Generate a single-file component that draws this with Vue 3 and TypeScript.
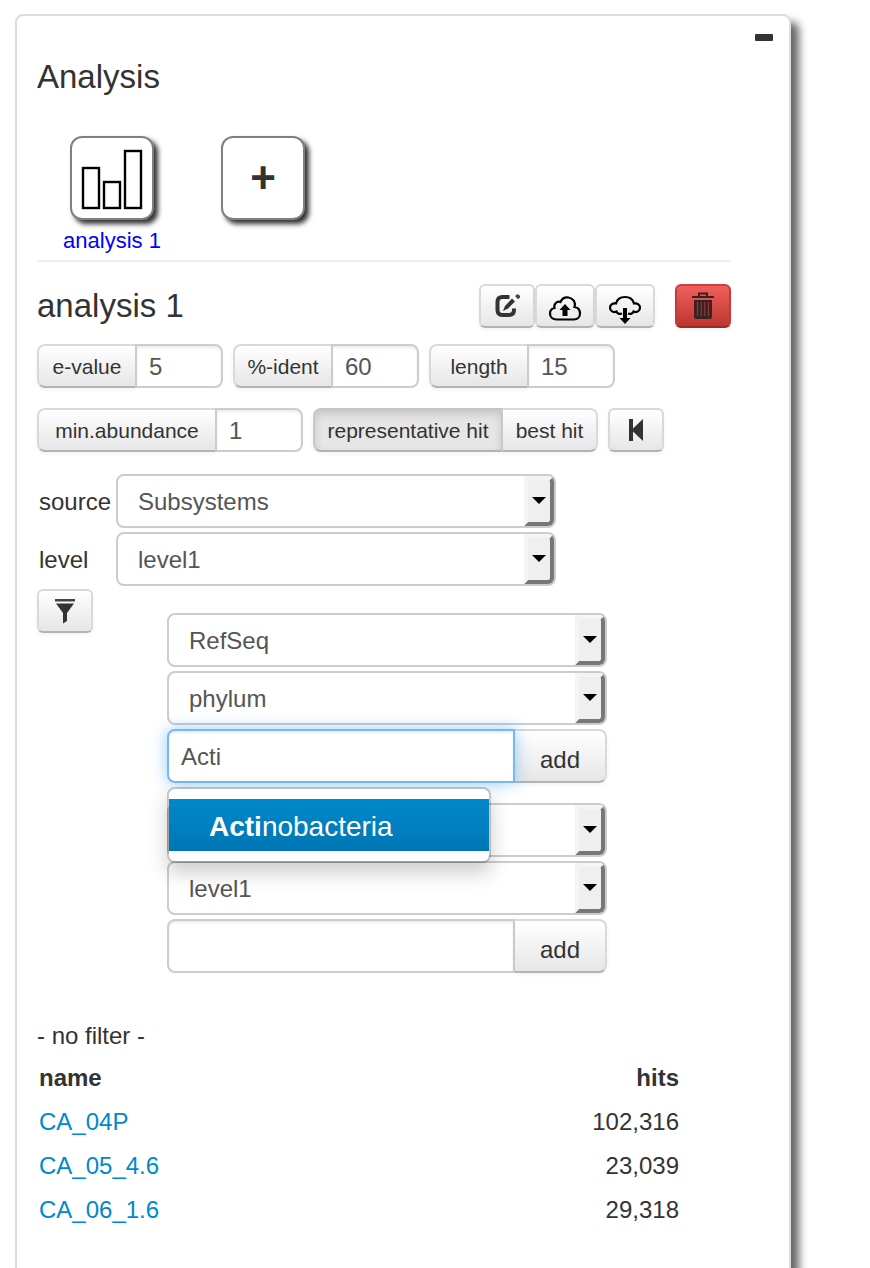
<script setup lang="ts">
import { ref } from 'vue'

interface Threshold {
  id: string
  label: string
  value: string
}

interface Row {
  name: string
  hits: number
}

const cutoffs = ref<Threshold[]>([
  { id: 'evalue', label: 'e-value', value: '5' },
  { id: 'ident', label: '%-ident', value: '60' },
  { id: 'length', label: 'length', value: '15' },
])
const abundance = ref('1')
const hitMode = ref<'representative' | 'best'>('representative')

const sources = ['Subsystems', 'RefSeq', 'KO', 'COG']
const levels = ['level1', 'level2', 'level3']
const ranks = ['domain', 'phylum', 'class', 'order']

const source = ref('Subsystems')
const level = ref('level1')
const taxSource = ref('RefSeq')
const taxRank = ref('phylum')
const taxText = ref('Acti')
const fnSource = ref('Subsystems')
const fnLevel = ref('level1')
const fnText = ref('')

const rows: Row[] = [
  { name: 'CA_04P', hits: 102316 },
  { name: 'CA_05_4.6', hits: 23039 },
  { name: 'CA_06_1.6', hits: 29318 },
]
const format = (n: number): string => n.toLocaleString('en-US')
</script>

<template>
  <main class="panel">
    <button class="collapse" type="button" aria-label="Collapse">
      <svg width="18" height="7" viewBox="0 0 18 7"><rect width="18" height="7" rx="1" fill="#333" /></svg>
    </button>

    <div class="body">
      <h1 class="title">Analysis</h1>

      <div class="tiles">
        <div class="tile-col">
          <button class="tile" type="button" aria-labelledby="tile-name">
            <svg width="62" height="62" viewBox="0 0 62 62" fill="none" stroke="#000" stroke-width="2.4">
              <rect x="2" y="19" width="16" height="40" />
              <rect x="23" y="33" width="16" height="26" />
              <rect x="44" y="2" width="16" height="57" />
            </svg>
          </button>
          <span id="tile-name" class="tile-name">analysis 1</span>
        </div>
        <div class="tile-col">
          <button class="tile plus" type="button">+</button>
        </div>
      </div>

      <div class="heading">
        <h2 class="title">analysis 1</h2>
        <div class="tools">
          <button class="btn" type="button" aria-label="Edit">
            <svg width="26" height="26" viewBox="0 0 26 26" fill="none">
              <path d="M15.500 4H8.500Q3.500 4 3.500 9V17Q3.500 22 8.500 22H15Q20 22 20 17V15.500" stroke="#333" stroke-width="4" />
              <path d="M9 18L11 13L18 5.500L21 8.500L14 15.500Z" fill="#333" />
              <path d="M21 3L23 1.500Q24 1 25 2L26 3Q26.500 4 25.700 4.800L24 6.200Z" fill="#444" />
            </svg>
          </button>
          <button class="btn wide" type="button" aria-label="Upload">
            <svg class="cloud" width="34" height="32" viewBox="0 0 34 32">
              <path d="M8.500 26.500C4.500 26.500 2 24 2 20.500C2 17.500 4 15.500 6.500 15C5.500 11 9 7.500 12.500 9C14 5.500 17 4 20.500 4.500C25.500 5.500 28 9.500 26.500 14C30 14.500 32 17 32 20.500C32 24 29.500 26.500 26 26.500Z" fill="none" stroke="#000" stroke-width="2.2" />
              <path d="M17 11L22.500 17H19.500V23H14.500V17H11.500Z" fill="#000" />
            </svg>
          </button>
          <button class="btn wide" type="button" aria-label="Download">
            <svg class="cloud" width="34" height="32" viewBox="0 0 34 32">
              <path d="M14 20.500C11.500 21.500 9 20.500 8.500 18.500C5 20 2 18 2 14.800C2 11.700 4.500 10 8 10.500C9 6.500 12.500 4 17 4C21.500 4 25 6.500 26 10.500C29.500 10 32 11.700 32 14.800C32 18 29 20 25.500 18.500C25 20.500 22.500 21.500 20 20.500" fill="none" stroke="#000" stroke-width="2.200" />
              <path d="M15 15H19V25H22.500L17 31L11.500 25H15Z" fill="#000" />
            </svg>
          </button>
          <button class="btn danger" type="button" aria-label="Delete">
            <svg width="22" height="28" viewBox="0 0 22 28">
              <path d="M7 4V1.500H15V4" fill="none" stroke="#3a2222" stroke-width="2" />
              <path d="M0 4H22V6H0Z" fill="#3a2222" />
              <path d="M2 8H20V24.500Q20 27 17.500 27H4.500Q2 27 2 24.500Z" fill="#3a2222" />
              <path d="M5.500 10V24M9.200 10V24M12.800 10V24M16.500 10V24" stroke="#8a3a38" stroke-width="1.200" />
            </svg>
          </button>
        </div>
      </div>

      <div class="row first">
        <div v-for="c in cutoffs" :key="c.id" class="prepend">
          <label class="tag" :for="c.id">{{ c.label }}</label>
          <input :id="c.id" v-model="c.value" class="field" type="text" />
        </div>
      </div>

      <div class="row second">
        <div class="prepend">
          <label class="tag long" for="abundance">min.abundance</label>
          <input id="abundance" v-model="abundance" class="field" type="text" />
        </div>
        <div class="toggle">
          <button type="button" class="btn text rep" :class="{ active: hitMode === 'representative' }" @click="hitMode = 'representative'">representative hit</button>
          <button type="button" class="btn text best" :class="{ active: hitMode === 'best' }" @click="hitMode = 'best'">best hit</button>
        </div>
        <button class="btn" type="button" aria-label="Reset to defaults">
          <svg width="16" height="22" viewBox="0 0 16 22"><path d="M1 0H5V9.500L15 0V22L5 12.500V22H1Z" fill="#333" /></svg>
        </button>
      </div>

      <div class="choices">
        <div class="choice">
          <label for="source">source</label>
          <div class="select">
            <select id="source" v-model="source"><option v-for="s in sources" :key="s">{{ s }}</option></select>
            <span class="drop"></span>
          </div>
        </div>
        <div class="choice">
          <label for="level">level</label>
          <div class="select">
            <select id="level" v-model="level"><option v-for="l in levels" :key="l">{{ l }}</option></select>
            <span class="drop"></span>
          </div>
        </div>
      </div>

      <div class="filter">
        <button class="btn" type="button" aria-label="Filter">
          <svg width="22" height="25" viewBox="0 0 22 25">
            <path d="M1 0H21V2.500H1Z" fill="#444" />
            <path d="M2 4.500H20L13 14V22L9 24.500V14Z" fill="#333" />
          </svg>
        </button>
        <div class="filter-forms">
          <div class="stack">
            <div class="select">
              <select v-model="taxSource" aria-label="Taxonomy source"><option v-for="s in sources" :key="s">{{ s }}</option></select>
              <span class="drop"></span>
            </div>
            <div class="select">
              <select v-model="taxRank" aria-label="Taxonomy level"><option v-for="r in ranks" :key="r">{{ r }}</option></select>
              <span class="drop"></span>
            </div>
            <div class="append">
              <input v-model="taxText" class="entry focused" type="text" aria-label="Taxonomy filter" />
              <button class="btn add" type="button">add</button>
              <ul class="typeahead">
                <li><a href="#"><strong>Acti</strong>nobacteria</a></li>
              </ul>
            </div>
          </div>
          <div class="stack">
            <div class="select">
              <select v-model="fnSource" aria-label="Function source"><option v-for="s in sources" :key="s">{{ s }}</option></select>
              <span class="drop"></span>
            </div>
            <div class="select">
              <select v-model="fnLevel" aria-label="Function level"><option v-for="l in levels" :key="l">{{ l }}</option></select>
              <span class="drop"></span>
            </div>
            <div class="append">
              <input v-model="fnText" class="entry" type="text" aria-label="Function filter" />
              <button class="btn add" type="button">add</button>
            </div>
          </div>
        </div>
      </div>

      <p class="note">- no filter -</p>
      <table class="hits">
        <thead>
          <tr><th scope="col">name</th><th scope="col" class="num">hits</th></tr>
        </thead>
        <tbody>
          <tr v-for="r in rows" :key="r.name">
            <td><a href="#">{{ r.name }}</a></td>
            <td class="num">{{ format(r.hits) }}</td>
          </tr>
        </tbody>
      </table>
    </div>
  </main>
</template>

<style>
body {
  margin: 0;
  background: #fff;
}
</style>

<style scoped>
* {
  box-sizing: border-box;
}

.panel {
  display: flex;
  flex-direction: column;
  min-height: 100vh;
  margin: 14px 79px 0 15px;
  padding: 18px 16px 20px 20px;
  border: 2px solid #ddd;
  border-radius: 8px;
  background: #fff;
  box-shadow: 8px 8px 8px #666;
  color: #333;
  font: 24px/40px "Liberation Sans", Arial, sans-serif;
}

button,
input,
select {
  margin: 0;
  font-family: inherit;
  outline: none;
}

svg {
  display: block;
}

.collapse {
  align-self: flex-end;
  padding: 0;
  border: 0;
  background: none;
}

.body {
  padding: 16px 42px 0 0;
}

.title {
  margin: 0;
  font-size: 33px;
  font-weight: 400;
  line-height: 40px;
}

.tiles {
  display: flex;
  gap: 1px;
  margin-top: 39px;
  padding-bottom: 6px;
  border-bottom: 2px solid #eee;
}

.tile-col {
  display: flex;
  flex-direction: column;
  align-items: center;
  width: 150px;
}

.tile {
  display: flex;
  align-items: center;
  justify-content: center;
  width: 84px;
  height: 84px;
  padding: 4px 0 0;
  border: 2px solid #808080;
  border-radius: 12px;
  background: #fff;
  box-shadow: 4px 4px 5px #333;
}

.plus {
  padding: 0;
  color: #333;
  font-size: 44px;
  font-weight: 700;
  line-height: 40px;
}

.tile-name {
  margin-top: 8px;
  color: #00f;
  font-size: 22px;
  line-height: 26px;
}

.heading {
  display: flex;
  justify-content: space-between;
  align-items: center;
  margin-top: 22px;
}

.tools {
  display: flex;
}

.btn {
  display: flex;
  align-items: center;
  justify-content: center;
  width: 56px;
  height: 44px;
  padding: 0;
  border: 2px solid #d9d9d9;
  border-bottom-color: #b3b3b3;
  border-radius: 6px;
  background: linear-gradient(#fff, #e6e6e6);
  box-shadow: 0 2px 4px rgba(0, 0, 0, 0.05);
  color: #333;
}

.wide {
  width: 60px;
}

.cloud {
  margin-top: 6px;
}

.danger {
  margin-left: 20px;
  border-color: #c9403b #c23b36 #9c2a25;
  background: linear-gradient(#ee5f5b, #bd362f);
}

.row {
  display: flex;
  flex-wrap: wrap;
  gap: 10px;
}

.first {
  margin-top: 16px;
}

.second {
  margin-top: 20px;
}

.prepend,
.toggle,
.append {
  display: flex;
}

.tag {
  display: flex;
  align-items: center;
  justify-content: center;
  width: 98px;
  height: 44px;
  padding-top: 2px;
  border: 2px solid #d9d9d9;
  border-right: 0;
  border-bottom-color: #b3b3b3;
  border-radius: 8px 0 0 8px;
  background: linear-gradient(#fff, #e6e6e6);
  box-shadow: 0 2px 4px rgba(0, 0, 0, 0.05);
  font-size: 21px;
}

.long {
  width: 178px;
}

.field {
  width: 88px;
  height: 44px;
  padding: 2px 12px 0;
  border: 2px solid #ccc;
  border-radius: 0 8px 8px 0;
  background: #fff;
  box-shadow: inset 0 2px 2px rgba(0, 0, 0, 0.075);
  color: #555;
  font-size: 24px;
}

.text {
  padding-top: 2px;
  font-size: 21px;
}

.rep {
  width: 190px;
  border-right-color: #ccc;
  border-radius: 8px 0 0 8px;
}

.best {
  width: 95px;
  border-left: 0;
  border-radius: 0 8px 8px 0;
}

.active {
  border-top-color: #c4c4c4;
  border-left-color: #c8c8c8;
  background: #e6e6e6;
  box-shadow: inset 0 4px 8px rgba(0, 0, 0, 0.15), 0 2px 4px rgba(0, 0, 0, 0.05);
}

.choices,
.stack {
  display: flex;
  flex-direction: column;
  gap: 4px;
}

.choices {
  margin-top: 22px;
}

.choice {
  display: flex;
  align-items: center;
}

.choice label {
  flex: none;
  width: 79px;
  padding: 2px 0 0 2px;
}

.select {
  position: relative;
  width: 440px;
  max-width: 100%;
}

.select select {
  display: block;
  width: 100%;
  height: 54px;
  padding: 0 40px 0 20px;
  border: 2px solid #ccc;
  border-radius: 8px;
  background: #fff;
  appearance: none;
  color: #555;
  font-size: 24px;
}

.drop {
  position: absolute;
  top: 2px;
  right: 2px;
  bottom: 2px;
  display: flex;
  align-items: center;
  justify-content: center;
  width: 30px;
  padding-bottom: 2px;
  border: 4px solid #777;
  border-top-color: #f4f4f4;
  border-left-color: #f4f4f4;
  border-radius: 0 6px 6px 0;
  background: #efefef;
  pointer-events: none;
}

.drop::after {
  content: "";
  border: 7px solid transparent;
  border-top-color: #000;
  border-bottom-width: 0;
}

.filter {
  display: flex;
  align-items: flex-start;
  gap: 74px;
  margin-top: 3px;
}

.filter-forms {
  display: flex;
  flex-direction: column;
  gap: 20px;
  margin-top: 24px;
}

.append {
  position: relative;
  width: 440px;
}

.entry {
  flex: 1;
  min-width: 0;
  height: 54px;
  padding: 2px 12px 0;
  border: 2px solid #ccc;
  border-radius: 8px 0 0 8px;
  background: #fff;
  box-shadow: inset 0 2px 2px rgba(0, 0, 0, 0.075);
  color: #555;
  font-size: 24px;
}

.focused {
  z-index: 1;
  border-color: #75b9f0;
  box-shadow: inset 0 2px 2px rgba(0, 0, 0, 0.075), 0 0 16px rgba(82, 168, 236, 0.6);
}

.add {
  width: 92px;
  height: 54px;
  padding-top: 8px;
  border-left: 0;
  border-radius: 0 8px 8px 0;
  font-size: 24px;
}

.typeahead {
  position: absolute;
  top: 58px;
  left: 0;
  z-index: 2;
  width: 324px;
  margin: 0;
  padding: 10px 0;
  border: 2px solid rgba(0, 0, 0, 0.2);
  border-radius: 8px;
  background: #fff;
  background-clip: padding-box;
  box-shadow: 0 10px 20px rgba(0, 0, 0, 0.2);
  list-style: none;
}

.typeahead a {
  display: block;
  padding: 8px 40px 4px;
  background: linear-gradient(#08c, #0077b3);
  color: #fff;
  font-size: 28px;
  line-height: 40px;
  text-decoration: none;
}

.note {
  margin: 43px 0 0;
}

.hits {
  width: 644px;
  max-width: 100%;
  border-collapse: collapse;
}

.hits th,
.hits td {
  padding: 2px;
  text-align: left;
}

.hits .num {
  text-align: right;
}

.hits a {
  color: #08c;
  text-decoration: none;
}
</style>
